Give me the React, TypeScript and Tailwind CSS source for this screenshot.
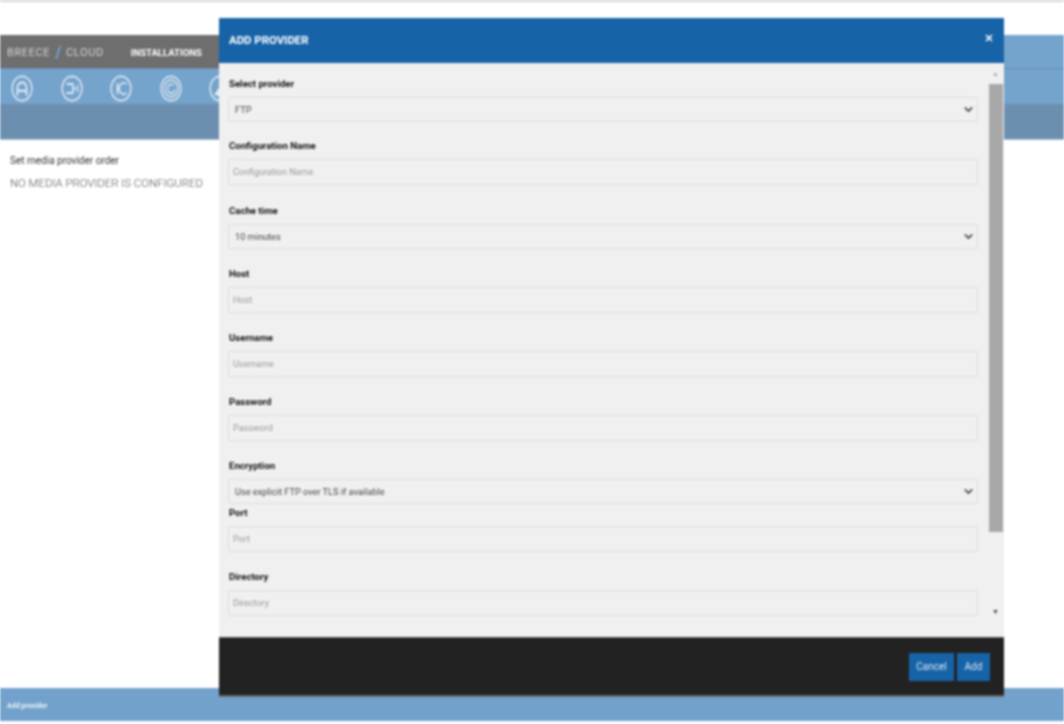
import { ChevronDown, X } from "lucide-react";

const fields = [
  { label: "Select provider", value: "FTP", select: true, mb: "mb-[17px]" },
  { label: "Configuration Name", placeholder: "Configuration Name", mb: "mb-[19px]" },
  { label: "Cache time", value: "10 minutes", select: true, mb: "mb-[18px]" },
  { label: "Host", placeholder: "Host", mb: "mb-[18px]" },
  { label: "Username", placeholder: "Username", mb: "mb-[18px]" },
  { label: "Password", placeholder: "Password", mb: "mb-[18px]" },
  { label: "Encryption", value: "Use explicit FTP over TLS if available", select: true, mb: "mb-[2px]" },
  { label: "Port", placeholder: "Port", mb: "mb-[18px]" },
  { label: "Directory", placeholder: "Directory", mb: "mb-0" },
];

function NavIcon({ children }: { children: React.ReactNode }) {
  return (
    <svg width="22" height="27" viewBox="0 0 24 24" preserveAspectRatio="none" fill="none" stroke="#dfeaf4" strokeWidth="1.5">
      <circle cx="12" cy="12" r="10.8" />
      {children}
    </svg>
  );
}

function Field({ field }: { field: (typeof fields)[number] }) {
  return (
    <div className={field.mb}>
      <div className="h-[15px] mb-[5px] pl-px text-[9.6px] leading-[14px] font-bold text-[#111]">{field.label}</div>
      {field.select ? (
        <div className="h-[25px] flex items-center justify-between pl-[6px] pr-[2px] border border-[#dedede] rounded-[2px] text-[9.2px] text-[#444]">
          <span>{field.value}</span>
          <ChevronDown size={13} strokeWidth={3} className="text-[#444]" />
        </div>
      ) : (
        <div className="h-[26px] flex items-center px-[4px] pt-[2px] border border-[#dedede] rounded-[2px] text-[9px] text-[#999]">
          {field.placeholder}
        </div>
      )}
    </div>
  );
}

export default function App() {
  return (
    <div className="relative h-[724px] w-[1064px] overflow-hidden bg-white blur-[0.85px] font-['Roboto',sans-serif]">
      <div className="h-[2px] bg-[#d4d4d4]" />
      <div className="mt-[33px] h-[34px] flex bg-[#74a3cc] border-b border-[#6d8fae]">
        <div className="w-[240px] flex items-center bg-[#6e6e6e] pl-[7px] pt-[3px]">
          <span className="text-[11px] tracking-[0.6px] text-[#d6d6d6]">BREECE</span>
          <span className="mx-[5px] text-[16px] leading-none font-bold text-[#74a9dc]">/</span>
          <span className="text-[11px] tracking-[0.6px] text-[#d6d6d6]">CLOUD</span>
          <span className="ml-[27px] text-[9.5px] font-bold text-white">INSTALLATIONS</span>
        </div>
      </div>
      <div className="h-[35px] flex items-center bg-[#74a3cc] pl-[11px] pt-[3px] gap-[27.5px]">
        <NavIcon>
          <path d="M7 18.5v-7a5 5 0 0 1 10 0v7M7 14h10" strokeWidth="2" />
        </NavIcon>
        <NavIcon>
          <path d="M6 8h7v8H6M13 12h3M18 9v6" strokeWidth="1.6" />
        </NavIcon>
        <NavIcon>
          <path d="M8 7v10M8 12h3M18 8a5 5 0 1 0 0 8" strokeWidth="1.6" />
        </NavIcon>
        <NavIcon>
          <circle cx="12" cy="12" r="7.5" />
          <path d="M15 9.5a4 4 0 1 0 1 3.5" />
        </NavIcon>
        <NavIcon>
          <path d="M7 17l6-7 4 4-7 4z" fill="#dfeaf4" />
        </NavIcon>
      </div>
      <div className="h-[36px] bg-[#6c8fb0] border-b border-[#a9c4dc]" />
      <div className="h-[548px] pl-[10px] pt-[14px]">
        <div className="text-[10px] leading-[14px] text-[#333]">Set media provider order</div>
        <div className="mt-[7px] text-[11.4px] leading-[16px] font-light text-[#555]">NO MEDIA PROVIDER IS CONFIGURED</div>
      </div>
      <div className="h-[33px] flex items-center bg-[#72a2cb] pl-[7px] pt-[4px] text-[7px] font-bold text-[#eef4f9]">Add provider</div>

      <div className="absolute left-[219px] top-[18px] w-[785px] h-[680px] flex flex-col">
        <div className="h-[45px] flex items-center justify-between bg-[#1763a8] px-[10px] text-white">
          <span className="text-[11.4px] font-bold">ADD PROVIDER</span>
          <X size={10} strokeWidth={4} className="mb-[5px]" />
        </div>
        <div className="h-[574px] flex bg-[#f0f0f0] overflow-hidden">
          <div className="w-[769px] pl-[9px] pr-[10px] pt-[14px]">
            {fields.map((field) => (
              <Field key={field.label} field={field} />
            ))}
          </div>
          <div className="w-[15px] flex flex-col items-center">
            <div className="h-[21px] flex items-center justify-center pt-[1px] text-[7px] text-[#aaa]">▲</div>
            <div className="w-[14px] h-[448px] bg-[#a8a8a8]" />
            <div className="flex-1 flex items-center justify-center pt-[55px] text-[7px] text-[#444]">▼</div>
          </div>
        </div>
        <div className="h-[60px] flex items-center justify-end gap-[3px] bg-[#222] border-t border-[#555] border-b-2 border-b-[#666] pr-[14px]">
          <button className="w-[45px] h-[28px] bg-[#1763a8] text-[10px] text-[#dbe8f3]">Cancel</button>
          <button className="w-[33px] h-[28px] bg-[#1763a8] text-[10px] text-[#dbe8f3]">Add</button>
        </div>
      </div>
    </div>
  );
}
